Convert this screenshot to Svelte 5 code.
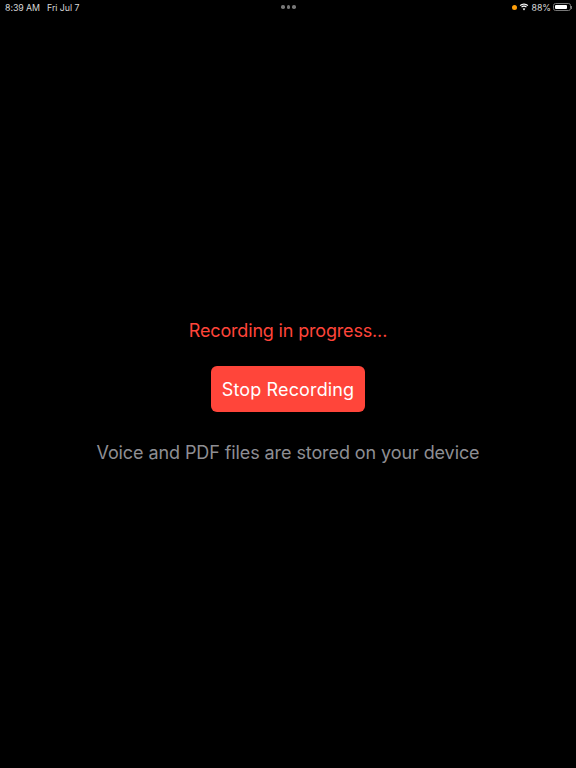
<script>
    let recording = $state(true);

    function handle_stop() {
        recording = false;
    }
</script>

<div class="screen">
    <div class="statusbar">
        <div class="left">
            <span>8:39 AM</span>
            <span>Fri Jul 7</span>
        </div>
        <div class="dots">
            <i></i><i></i><i></i>
        </div>
        <div class="right">
            <span class="mic"></span>
            <svg class="wifi" width="10" height="8" viewBox="0 0 11 9">
                <path d="M5.5 1.9c1.5 0 2.9.6 3.9 1.6l.9-.9C9 1.3 7.3.5 5.5.5S2 1.3.7 2.6l.9.9c1-1 2.4-1.6 3.9-1.6z" fill="#fff"/>
                <path d="M5.5 4.2c.9 0 1.7.4 2.3 1l.9-.9c-.8-.9-2-1.4-3.2-1.4s-2.4.5-3.2 1.4l.9.9c.6-.6 1.4-1 2.3-1z" fill="#fff"/>
                <path d="M5.5 5.9c-.6 0-1.1.2-1.5.6l1.5 1.9L7 6.5c-.4-.4-.9-.6-1.5-.6z" fill="#fff"/>
            </svg>
            <span class="pct">88%</span>
            <span class="battery"><span class="level"></span></span>
            <span class="cap"></span>
        </div>
    </div>

    <main>
        <p class="status">Recording in progress...</p>
        <button onclick={handle_stop}>Stop Recording</button>
        <p class="note">Voice and PDF files are stored on your device</p>
    </main>
</div>

<style>
    :global(body) {
        background: #000;
    }

    .screen {
        width: 576px;
        height: 768px;
        background: #000;
        display: flex;
        flex-direction: column;
        font-family: Inter, "Liberation Sans", sans-serif;
        overflow: hidden;
    }

    .statusbar {
        height: 14px;
        flex: none;
        display: grid;
        grid-template-columns: 1fr auto 1fr;
        align-items: center;
        padding: 0 4px 0 5px;
        color: #d8d8d8;
        font-size: 8.8px;
    }

    .left {
        display: flex;
        gap: 7px;
        letter-spacing: -0.05px;
    }

    .dots {
        display: flex;
        gap: 2px;
    }

    .dots i {
        width: 3.5px;
        height: 3.5px;
        border-radius: 50%;
        background: #777;
    }

    .right {
        display: flex;
        justify-content: flex-end;
        align-items: center;
        gap: 3px;
    }

    .mic {
        width: 5px;
        height: 5px;
        border-radius: 50%;
        background: #ff9f0a;
        margin-right: -1px;
    }

    .wifi {
        margin-right: -1px;
    }

    .battery {
        width: 18px;
        height: 8px;
        border: 1px solid #777;
        border-radius: 2.5px;
        padding: 1px;
        box-sizing: border-box;
        display: flex;
        margin-left: -1px;
    }

    .level {
        width: 88%;
        background: #fff;
        border-radius: 1px;
    }

    .cap {
        width: 1px;
        height: 3px;
        background: #777;
        margin-left: -3px;
    }

    main {
        display: flex;
        flex-direction: column;
        align-items: center;
        padding-top: 305px;
    }

    p {
        margin: 0;
    }

    .status {
        color: #ff453a;
        font-size: 18px;
        line-height: 24px;
        letter-spacing: -0.17px;
    }

    button {
        all: unset;
        margin-top: 23px;
        width: 154px;
        height: 46px;
        background: #ff453a;
        border-radius: 6px;
        color: #fff;
        font-size: 18px;
        letter-spacing: 0.14px;
        text-align: center;
        cursor: pointer;
    }

    .note {
        margin-top: 29px;
        color: #8e8e93;
        font-size: 18px;
        line-height: 24px;
        letter-spacing: -0.09px;
    }
</style>
